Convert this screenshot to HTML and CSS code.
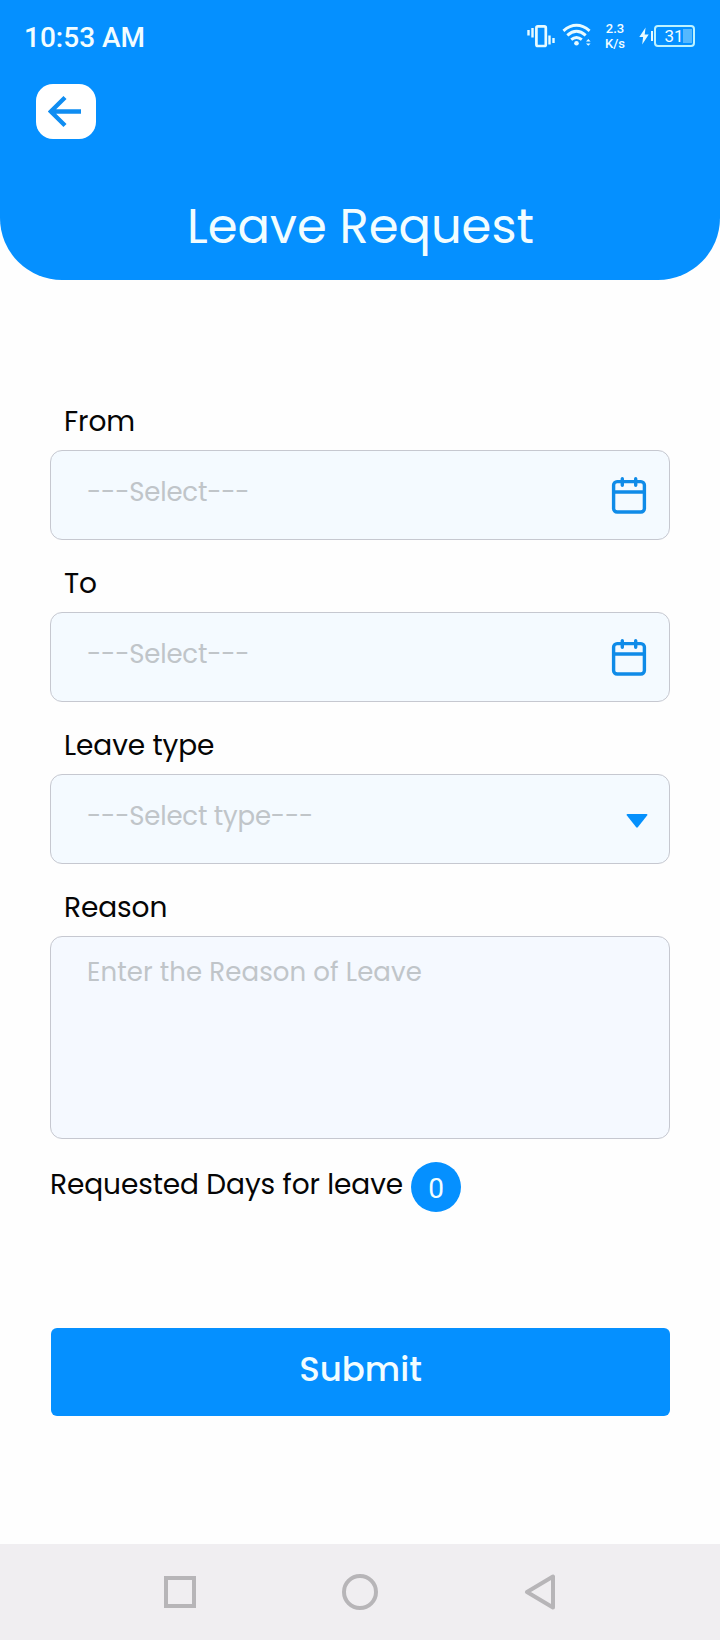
FILE: index.html
```
<!DOCTYPE html>
<html lang="en">
<head>
    <meta charset="UTF-8">
    <meta name="viewport" content="width=device-width, initial-scale=1.0">
    <title>Leave Request</title>
    <link rel="stylesheet" href="styles.css">
</head>
<body>
    <header>
        <div class="status-bar">
            <span class="time">10:53 AM</span>
            <div class="status-icons">
                <svg class="vibrate-icon" width="28" height="24" viewBox="0 0 28 24" fill="none" stroke="#e8fbff" stroke-width="2.4">
                    <rect x="9.4" y="2.4" width="9.4" height="19.6" rx="1.5" stroke-width="2.7"/>
                    <path d="M1.5 6v5.5M5.5 4v9.5M22.5 11.5v9M26.5 14v5"/>
                </svg>
                <svg class="wifi-icon" width="30" height="24" viewBox="0 0 30 24" fill="none" stroke="#e8fbff" stroke-width="2.9">
                    <path d="M1.4 7.8Q14.5-3.2 27.6 7.8M5.3 12.3Q14.5 4.2 23.7 12.3M9.2 16.6Q14.5 12.2 19.8 16.6"/>
                    <circle cx="14.5" cy="20.3" r="2.3" fill="#e8fbff" stroke="none"/>
                    <path d="M24 18.4l2.3-2.4 2.3 2.4zM24 20.4l2.3 2.4 2.3-2.4z" fill="#e8fbff" stroke="none"/>
                </svg>
                <div class="speed"><span>2.3</span><span>K/s</span></div>
                <svg class="bolt-icon" width="10" height="18" viewBox="0 0 10 18" fill="#e8fbff">
                    <path d="M6.6 0.5L0.3 10h3.8L3.2 17.5 9.7 7.4H5.7z"/>
                </svg>
                <div class="battery"><span>31</span></div>
            </div>
        </div>
        <button class="back-button" aria-label="Back">
            <svg width="36" height="34" viewBox="0 0 36 34" fill="none" stroke="#0f8df2" stroke-width="4.4">
                <path d="M33 16.5H3M17 2.5L2.8 16.5 17 30.5"/>
            </svg>
        </button>
        <h1>Leave Request</h1>
    </header>

    <main class="leave-form">
        <div class="form-group">
            <label>From</label>
            <div class="field">
                <span class="placeholder">---Select---</span>
                <svg class="calendar-icon" width="36" height="38" viewBox="0 0 36 38" fill="none" stroke="#0f8be8" stroke-width="3.4" stroke-linecap="round">
                    <rect x="2.6" y="5.6" width="30.8" height="30.4" rx="3.5"/>
                    <path d="M3 16h30M11.3 2.8v6.4M24.7 2.8v6.4"/>
                </svg>
            </div>
        </div>
        <div class="form-group">
            <label>To</label>
            <div class="field">
                <span class="placeholder">---Select---</span>
                <svg class="calendar-icon" width="36" height="38" viewBox="0 0 36 38" fill="none" stroke="#0f8be8" stroke-width="3.4" stroke-linecap="round">
                    <rect x="2.6" y="5.6" width="30.8" height="30.4" rx="3.5"/>
                    <path d="M3 16h30M11.3 2.8v6.4M24.7 2.8v6.4"/>
                </svg>
            </div>
        </div>
        <div class="form-group">
            <label>Leave type</label>
            <div class="field">
                <span class="placeholder">---Select type---</span>
                <svg class="arrow-icon" width="22" height="14" viewBox="0 0 22 14" fill="#0590fc">
                    <path d="M1.5 0h19q1.5 0.3 0.6 1.6L11.8 13.2q-0.8 0.9-1.6 0L0.9 1.6Q0 0.3 1.5 0z"/>
                </svg>
            </div>
        </div>
        <div class="form-group">
            <label>Reason</label>
            <div class="field reason-field">
                <span class="placeholder">Enter the Reason of Leave</span>
            </div>
        </div>
        <div class="days">
            <span class="days-label">Requested Days for leave</span>
            <span class="days-count">0</span>
        </div>
        <button class="submit-button">Submit</button>
    </main>

    <footer class="nav-bar">
        <svg width="36" height="36" viewBox="0 0 36 36" fill="none" stroke="#b7b5b8" stroke-width="4">
            <rect x="4" y="4" width="28" height="28"/>
        </svg>
        <svg width="36" height="36" viewBox="0 0 36 36" fill="none" stroke="#b7b5b8" stroke-width="4">
            <circle cx="18" cy="18" r="16"/>
        </svg>
        <svg width="36" height="36" viewBox="0 0 36 36" fill="none" stroke="#b7b5b8" stroke-width="4" stroke-linejoin="round">
            <path d="M31 2.5v31L5 18z"/>
        </svg>
    </footer>
</body>
</html>
```
FILE: styles.css
```
* {
    box-sizing: border-box;
}
body {
    font-family: Poppins, Inter, sans-serif;
    margin: 0;
    min-height: 1640px;
    display: flex;
    flex-direction: column;
    background-color: #fefefe;
    color: #050505;
}
button {
    border: none;
    padding: 0;
    font-family: inherit;
    cursor: pointer;
}
header {
    height: 280px;
    background-color: #0590ff;
    border-radius: 0 0 62px 62px;
    color: #f2fdff;
}
.status-bar {
    display: flex;
    justify-content: space-between;
    align-items: center;
    height: 72px;
    padding: 0 25px 0 24px;
    font-family: Roboto, sans-serif;
}
.time {
    font-size: 28px;
    font-weight: 500;
    padding-top: 3px;
}
.status-icons {
    display: flex;
    align-items: center;
}
.vibrate-icon {
    margin-bottom: 1px;
}
.wifi-icon {
    margin: 0 0 2px 7px;
}
.speed {
    display: flex;
    flex-direction: column;
    align-items: center;
    width: 22px;
    margin-left: 12px;
    font-size: 13px;
    font-weight: 500;
    line-height: 15px;
}
.bolt-icon {
    margin: 0 2px 0 13px;
}
.battery {
    display: flex;
    align-items: center;
    justify-content: center;
    width: 41px;
    height: 22px;
    border: 2px solid #bff3ff;
    border-radius: 4px;
    background: linear-gradient(#55b8ff, #55b8ff) 27px 2px / 9px 14px no-repeat;
    font-size: 17px;
    padding-right: 1px;
    margin-left: 3px;
    position: relative;
}
.battery::before {
    content: "";
    position: absolute;
    left: -5px;
    top: 4px;
    width: 2px;
    height: 10px;
    background-color: #e8fbff;
}
.back-button {
    display: flex;
    align-items: center;
    justify-content: center;
    width: 60px;
    height: 55px;
    margin: 12px 0 0 36px;
    border-radius: 17px;
    background-color: #fff;
}
h1 {
    margin: 58px 0 0;
    padding-left: 1px;
    font-size: 48px;
    font-weight: 400;
    line-height: 60px;
    text-align: center;
}
.leave-form {
    display: flex;
    flex-direction: column;
    flex: 1;
    padding: 122px 50px 0;
}
.form-group {
    margin-bottom: 24px;
}
label {
    display: block;
    margin: 0 0 8px 14px;
    font-size: 28px;
    line-height: 40px;
    letter-spacing: -0.08px;
}
.field {
    display: flex;
    align-items: center;
    justify-content: space-between;
    height: 90px;
    padding: 0 22px 0 36px;
    border: 1px solid #c6c8d0;
    border-radius: 12px;
    background-color: #f4faff;
}
.placeholder {
    color: #c0c5c9;
    font-size: 26px;
    line-height: 36px;
    padding-bottom: 7px;
    letter-spacing: -0.22px;
}
.arrow-icon {
    margin: 3px -1px 0 0;
}
.reason-field {
    align-items: flex-start;
    height: 203px;
    padding-top: 17px;
    background-color: #f5f9ff;
}
.reason-field .placeholder {
    letter-spacing: 0.1px;
}
.days {
    display: flex;
    align-items: center;
    height: 50px;
    margin-top: -1px;
}
.days-label {
    width: 361px;
    font-size: 28px;
    line-height: 40px;
    padding-bottom: 5px;
    letter-spacing: -0.08px;
    white-space: nowrap;
}
.days-count {
    width: 50px;
    height: 50px;
    border-radius: 50%;
    background-color: #0590ff;
    color: #f2fdff;
    font-family: Roboto, sans-serif;
    font-size: 28px;
    line-height: 53px;
    text-align: center;
}
.submit-button {
    height: 88px;
    margin: 116px 0 0 1px;
    padding-bottom: 6px;
    border-radius: 6px;
    background-color: #0590ff;
    color: #f2fdff;
    font-size: 34px;
    font-weight: 500;
}
.nav-bar {
    display: flex;
    justify-content: space-between;
    align-items: center;
    height: 96px;
    padding: 0 162px;
    background-color: #f0eef1;
}
```
